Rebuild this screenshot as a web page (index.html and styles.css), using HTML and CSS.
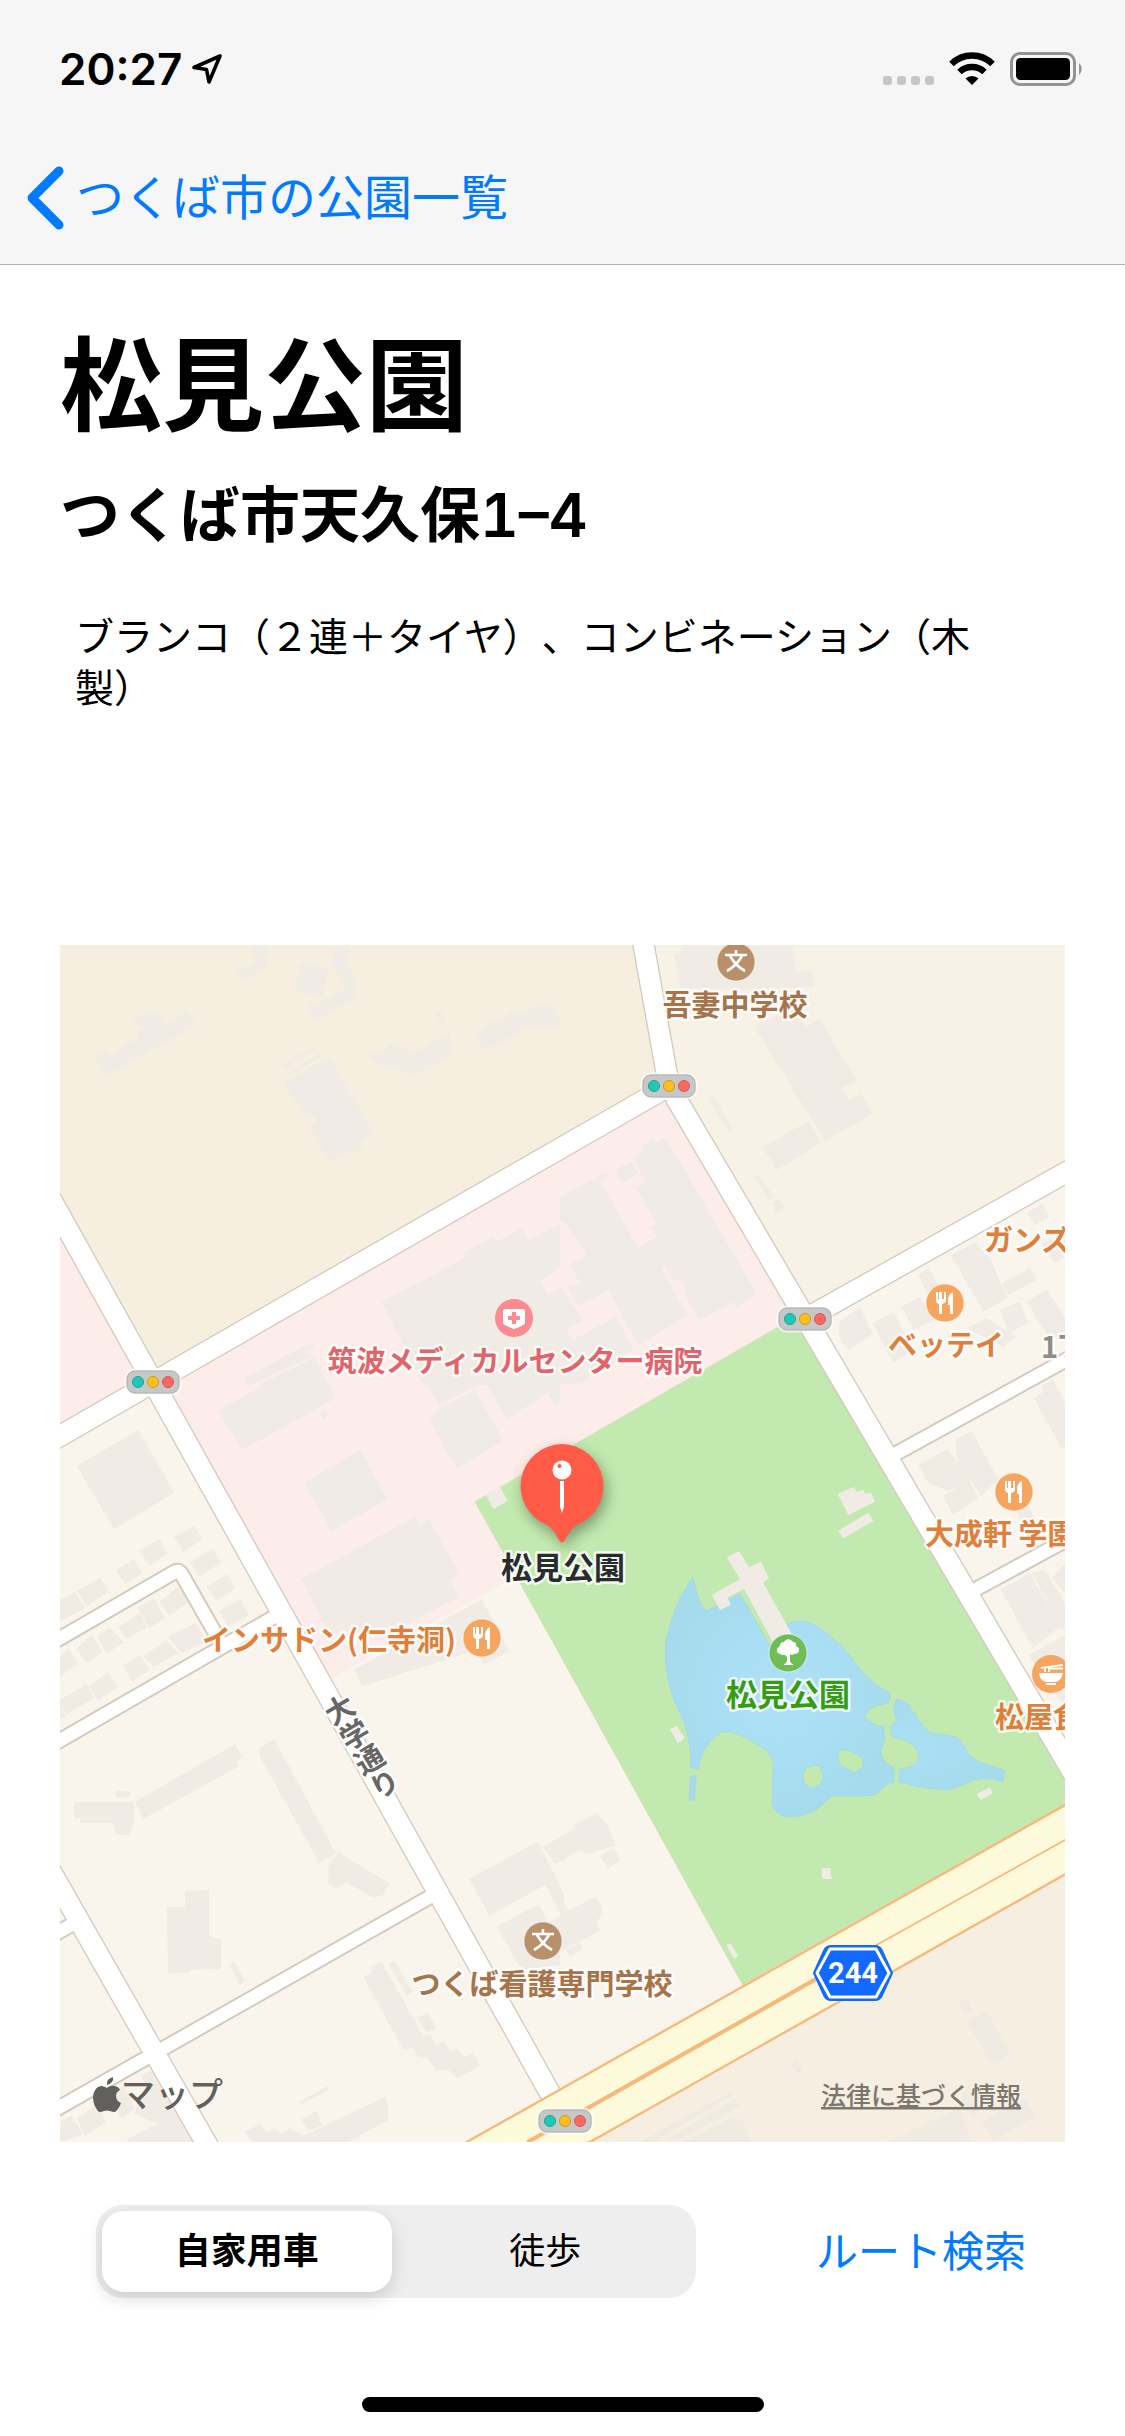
FILE: index.html
```html
<!DOCTYPE html>
<html lang="ja">
<head>
<meta charset="utf-8">
<meta name="viewport" content="width=device-width">
<title>松見公園</title>
<link rel="stylesheet" href="styles.css">
</head>
<body>
<header class="top">
  <div class="status">
    <div class="status-side">
      <span class="time">20:27</span>
      <svg class="locate" width="32" height="32" viewBox="0 0 32 32" aria-hidden="true"><path d="M29 3 3 14.500 15.500 16.500 18 29Z" fill="none" stroke="#000" stroke-width="3.600" stroke-linejoin="round"/></svg>
    </div>
    <div class="status-side">
      <svg width="52" height="34" viewBox="0 0 52 34" aria-hidden="true"><g fill="#c6c6c6"><rect y="24" width="9" height="9" rx="3"/><rect x="14" y="24" width="9" height="9" rx="3"/><rect x="28" y="24" width="9" height="9" rx="3"/><rect x="42" y="24" width="9" height="9" rx="3"/></g></svg>
      <svg class="wifi" width="46" height="34" viewBox="0 0 46 34" aria-hidden="true"><path d="M23 33 16.500 26.500A9.500 9.500 0 0 1 29.500 26.500Z"/><path d="M10.500 20A18 18 0 0 1 35.500 20M2.500 12A29 29 0 0 1 43.500 12" fill="none" stroke="#000" stroke-width="6.500"/></svg>
      <svg class="battery" width="74" height="34" viewBox="0 0 74 34" aria-hidden="true"><rect x="1.500" y="1.500" width="63" height="31" rx="8.500" fill="none" stroke="#939393" stroke-width="3"/><rect x="6" y="6" width="54" height="22" rx="4.500"/><path d="M69 11a8 8 0 0 1 0 12Z" fill="#939393"/></svg>
    </div>
  </div>
  <nav class="nav">
    <a class="back" href="#">
      <svg width="46" height="66" viewBox="0 0 46 66" aria-hidden="true"><path d="M37 6 10 33 37 60" fill="none" stroke="#007aff" stroke-width="9" stroke-linecap="round" stroke-linejoin="round"/></svg>
      <span>つくば市の公園一覧</span>
    </a>
  </nav>
</header>
<main class="content">
  <h1 class="name">松見公園</h1>
  <h2 class="address">つくば市天久保1–4</h2>
  <p class="equipment">ブランコ（２連＋タイヤ）、コンビネーション（木製）</p>
  <svg class="map" viewBox="0 0 1005 1197" role="img" aria-label="松見公園周辺の地図">
    <defs>
      <radialGradient id="deep"><stop offset="0" stop-color="#aee1f6"/><stop offset="1" stop-color="#a6dbee"/></radialGradient>
      <g id="signal"><rect x="-27" y="-12" width="54" height="24" rx="9" fill="#c6c7c9" stroke="#fff" stroke-opacity=".6" stroke-width="3"/><rect x="-26" y="-11" width="52" height="22" rx="8" fill="#c6c7c9" stroke="#aeb0b2"/><circle cx="-15" r="5.500" fill="#1dc9b7" stroke="#25a092"/><circle r="5.500" fill="#ffbf1c" stroke="#d09a16"/><circle cx="15" r="5.500" fill="#ff6763" stroke="#d65754"/></g>
      <g id="food"><circle r="19" fill="#f5a560" stroke="#fff" stroke-opacity=".5"/><path d="M-9-11V-3Q-9 0-6 1V11H-3V1Q1 0 1-3V-11H-1V-4H-3V-11H-6V-4H-7V-11ZM8-11Q3-9 3-2V2H5V11H8Z" fill="#fff"/></g>
      <g id="school"><circle r="19" fill="#b8916c" stroke="#fff" stroke-opacity=".5"/><path d="M0-12V-7M-11-7H11M6-6Q0 4-9 9M-6-6Q0 4 9 9" fill="none" stroke="#fff" stroke-width="2.600"/></g>
      <path id="roads" d="M-40 1496 1827 423M-40 740 1501 3500M1740-60 1820 385 1851 465 3074 2542M2235 1122 3060 659"/>
      <path id="lanes" d="M-40 2757 263 3288 480 3666"/>
      <path id="streets" d="M2460 1552 3060 1222M2710 1953 3060 1763M-40 2103 345 1880Q357 1875 364 1886L480 2090M-40 2409 670 2000M-40 3509 1125 2847M-40 2981 60 2925"/>
    </defs>
    <g transform="scale(.333333)">
      <path fill="#f9f5ed" d="M0 0H3015V3591H0Z"/>
      <path fill="#f6efdf" d="M0 0H1755L1827 423 265 1315 0 808Z"/>
      <path fill="#f8f1e5" d="M1755 0H3015V684L2235 1122 1827 423Z"/>
      <path fill="#f9f4ec" d="M805 2205 1375 1890 2048 3120 1500 3433Z"/>
      <path fill="#fcedea" d="M0 808 279 1310 0 1473ZM279 1310 1827 423 2235 1110 1245 1670 1375 1890 805 2205Z"/>
      <path fill="#c2e9af" stroke="#dfd9b9" stroke-width="2" d="M1245 1670 2170 1137 2235 1110 3015 2441V2580L2048 3120Z"/>
      <path fill="#f6eee0" d="M3015 2788V3591H1590Z"/>

      <!-- north-west blocks -->
      <g fill="#f0ebe4" transform="translate(0 -15)">
        <path d="M565 15H612L631 55 615 68 620 85 545 128 522 85 540 78 548 86 590 63ZM722 65 807 85 787 170 703 150ZM828 15H870L858 65 895 133 880 143 887 172 765 241 738 190 757 182 767 197 856 145 815 68ZM220 238 297 208 318 250 370 222V208L380 205 408 253 135 410 110 370V347L138 332 150 345 240 290 232 275 262 260 232 262ZM668 372 765 318 770 328 675 385ZM686 397 778 342 780 350 690 406ZM673 427 808 350 942 585 905 605 908 622 872 645 862 632 808 663 750 560 770 545 765 525 737 535ZM925 345 980 328 985 310 1070 335 1165 280 1178 308 1168 318 1180 340 1065 405 942 368ZM1125 222 1142 215 1163 245 1150 257ZM1240 285 1290 255V240H1320L1360 213 1400 220 1430 190 1475 195 1500 235V262L1440 265 1390 260 1375 280 1270 330Z"/>
        <path d="M965 1085 1215 955 1212 937 1300 890 1310 905 1385 863 1407 900 1500 850V985L1440 1020 1462 1062 1500 1045V1335H1090ZM555 1315 755 1208 765 1220 560 1335ZM595 1335 765 1255 800 1335Z"/>
      </g>
      <!-- north-east blocks -->
      <g fill="#f0ebe4" transform="translate(1500 -15)">
        <path d="M362 15H697L708 95 755 88 762 140 600 150 362 145 343 48 362 38ZM582 258 700 200 735 260 778 235 888 422 845 445 867 480 902 462 937 522 795 602ZM445 475 458 465 517 568 505 576ZM608 620 747 542 783 608 650 690ZM583 712 597 703 640 770 628 780ZM635 790 655 777 672 802 650 820Z"/>
        <path d="M0 770 135 698 145 705 120 725 235 923 292 890 275 862 292 855 228 743 256 727 220 655 248 635 247 618 280 598 288 607 317 595 590 1060 528 1100 520 1085 418 1140 375 1065 382 1050 358 1018 345 1025 315 980 303 985 352 1075 383 1125 235 1215 145 1050 55 1098 20 1040 60 1028 30 975 80 945 15 848 0 845ZM165 690 215 665 235 700 185 730ZM0 1035 70 1140 18 1168 38 1200 168 1130 220 1230 60 1330H0Z"/>
        <path d="M1172 945 1245 908 1290 955 1342 1075 1270 1115ZM1400 820 1447 790 1468 830 1425 855ZM1445 910 1500 890 1515 890V950L1485 970ZM1325 1030 1410 985 1430 1020 1345 1065ZM1075 1005 1105 985 1140 1040 1100 1060ZM1025 1100 1080 1070 1120 1140 1060 1170ZM938 1150 1000 1115 1060 1230 1000 1268ZM838 1145 900 1102 940 1182 865 1230 838 1195ZM1320 1110 1380 1085 1405 1150 1345 1180ZM1400 1085 1460 1048 1515 1130V1180L1470 1200ZM1220 1165 1280 1135 1370 1190 1330 1220Z"/>
      </g>
      <!-- west blocks -->
      <g fill="#f0ebe4" transform="translate(0 1245)">
        <path d="M50 318 235 210 343 398 162 508ZM475 152 765-10 827 115 547 270ZM778 160 795 148 807 165 790 178ZM555 55 700-25 765-15 570 75ZM1090 50 1075-20H1500V130L1485 135 1460 100 1342 177 1275 62 1138 135ZM1107 180 1128 165 1125 153 1245 90 1330 243 1190 325ZM733 370 900 270 982 418 815 512ZM723 658 1065 470 1080 492 1108 478 1197 643 1172 660 1197 710 1000 815H808ZM880 930 1265 718 1348 873 1272 912 1250 870 908 978Z"/>
        <path d="M342 532 402 498 427 537 370 577ZM238 572 298 538 322 580 270 617ZM168 630 222 597 247 640 195 672ZM390 605 458 567 483 608 417 650ZM440 680 502 642 527 685 470 723ZM477 753 542 718 568 765 505 800ZM0 720 45 695 75 745 0 783ZM50 692 120 653 145 695 80 738ZM300 725 352 682 388 725 327 768ZM232 742 282 717 315 775 268 804ZM175 800 240 760 262 800 200 838ZM112 830 150 802 190 848 140 880ZM48 865 95 825 128 875 80 910ZM0 890 25 865 55 910 0 950ZM323 830 405 790 440 845 365 880ZM252 888 318 840 355 880 282 920ZM190 915 240 885 270 930 215 965ZM85 980 145 937 175 980 115 1020ZM0 1020 80 972 102 1015 20 1062 0 1040ZM0 1040 18 1070 0 1078Z"/>
        <path d="M225 1325 525 1153 547 1193 530 1205 538 1218 250 1377ZM598 1163 643 1138 828 1480 778 1510 600 1190ZM168 1293H210V1312H168ZM42 1326H222V1395L205 1425H170L158 1389H60V1374H42ZM835 1477 988 1570 970 1605 938 1613 860 1567 828 1586 805 1573V1520Z"/>
      </g>
      <!-- south-west blocks -->
      <g fill="#f0ebe4" transform="translate(0 2505)">
        <path d="M375 332 447 330V468L483 480V567L390 570V576L324 581 321 381H375ZM507 553 523 545 555 605 538 615ZM910 592 935 575V560L963 542 1090 768 1110 762 1130 795 1150 783 1172 815 1190 803 1215 832 1238 818 1260 858 1192 895 1165 870 1130 872 1100 832 1075 832 1060 805 1030 808ZM985 552 1005 543 1057 635 1040 648ZM1072 713 1105 697 1128 745 1098 760ZM718 965 805 917 808 928 722 974ZM725 1018 770 993 787 1035 745 1055ZM555 1055 600 1033 620 1055 645 1043 665 1062 690 1045 730 1067 975 950 985 985V1020L865 1086H575ZM245 885 290 862 360 990 375 1035 400 1086H200L205 1075 300 1030 275 1025 220 1000 260 940ZM50 1015 110 975 140 1025 75 1067ZM145 950 190 915 225 985 185 1017ZM0 1025 35 1007 70 1065 0 1086Z"/>
        <path d="M1227 297 1433 185 1490 295 1515 350 1500 395 1455 315 1288 407ZM1447 200 1515 165V240L1485 250ZM1310 440 1435 373 1465 425 1500 410V555L1385 570Z"/>
      </g>
      <!-- blocks east of the college and south of the highway -->
      <g fill="#f0ebe4" transform="translate(1500 2505)">
        <path d="M0 170 48 145 42 135 112 98 145 140 167 198 75 222 65 208 0 243ZM120 228 158 203 182 240 145 265ZM0 348 25 392 103 352Q130 370 128 405L108 425 120 452 0 515ZM18 510 60 487 68 505 30 530Z"/>
        <path fill="#efeae2" d="M1193 672 1218 656 1237 690 1213 700ZM1222 727 1280 692 1350 820 1320 845 1295 852ZM690 852 712 838 728 873 710 883ZM240 1086 515 935 518 945 280 1086ZM325 1075 525 958 538 980 345 1086ZM370 1086 520 1010 545 1020 575 1086ZM980 1086 1195 985 1235 1086ZM1265 1025 1395 955 1425 1010 1300 1080ZM1205 960 1225 910 1260 990 1240 1018Z"/>
      </g>

      <g transform="translate(1500 1245)">
        <path fill="url(#deep)" stroke="#a4d9e4" stroke-width="3" fill-rule="evenodd" d="M398 652 408 690 420 725 437 754 475 735 540 700 628 855 700 870 680 793Q735 770 782 806L845 858Q880 900 910 940 950 980 992 1002L985 1030Q925 1035 915 1070 935 1096 970 1100L975 1135 962 1172Q970 1215 1002 1222V1265L985 1270 945 1305Q880 1312 820 1307 800 1318 780 1340 745 1372 680 1370 640 1360 636 1330L640 1205 625 1175Q580 1142 540 1125 490 1105 475 1122 420 1165 415 1228L392 1222V1180Q385 1110 365 1070 310 970 316 850 330 780 362 710ZM845 1170Q870 1165 908 1195V1222L885 1238 840 1215Q825 1185 845 1170ZM738 1222 762 1216 780 1218 790 1250 780 1275 755 1285 733 1270 727 1248Z"/>
        <path fill="url(#deep)" stroke="#a4d9e4" stroke-width="3" d="M1010 1018Q1040 1018 1055 1050L1090 1100 1110 1118Q1150 1125 1185 1130 1210 1145 1225 1180 1245 1205 1285 1215L1335 1232 1328 1265Q1265 1245 1225 1268L1170 1290Q1100 1290 1018 1266V1227Q1070 1225 1078 1190 1070 1140 995 1130L992 1098 1010 1080 1000 1045ZM392 1248H408L403 1320H388Z"/>
        <g fill="#f0ebe4"><path d="M500 592 537 573 568 622 603 605 627 655 610 668 700 830 640 850 552 687 503 712 512 735 480 750 455 705 540 657ZM833 402 882 380 890 395 910 390 915 403 932 397 945 425 865 465ZM835 512 925 458 940 483 850 535ZM330 1108 350 1098 375 1135 353 1150ZM1250 1302 1290 1282 1298 1300 1262 1320ZM785 1525H812V1550H816V1557H790L785 1550ZM498 1755 512 1750 535 1788 522 1797ZM-222 405-192 387-182 376-157 422-200 448Z"/>
        <path d="M1075 315 1162 267 1195 310 1185 240 1235 212 1315 358 1262 410 1235 362 1165 393 1105 370ZM1148 408 1230 362 1255 415 1178 465ZM1422 115 1450 95 1443 78 1480 58 1515 125V270L1505 265ZM1370 455 1400 435 1430 480H1380ZM1322 688 1410 640 1500 800 1418 865ZM1415 637 1455 628 1515 730V810L1502 808ZM1405 885 1515 825V1040ZM1475 655 1515 610V700Z"/></g>
      </g>

      <g fill="none" stroke="#d5cabd"><use href="#roads" stroke-width="68"/><use href="#lanes" stroke-width="68"/><use href="#streets" stroke-width="50"/></g>
      <g fill="none" stroke="#fff"><use href="#roads" stroke-width="60"/><use href="#lanes" stroke-width="60"/><use href="#streets" stroke-width="38"/></g>
      <path fill="#fcfadb" stroke="#f6b97b" stroke-width="7" d="M3060 2555 1217 3593 1400 3640 1590 3591 3060 2763Z"/>
      <path fill="none" stroke="#f6b97b" stroke-width="5" d="M3060 2660 2265 3103"/>
      <path fill="#f6b97b" d="M2450 2998 2265 3097 1400 3586V3600L2265 3111Z"/>
    </g>

    <use href="#signal" x="609" y="141"/><use href="#signal" x="745" y="374"/><use href="#signal" x="93" y="437"/><use href="#signal" x="505" y="1176"/>
    <use href="#school" x="676" y="17"/><use href="#school" x="483" y="996"/>
    <use href="#food" x="885" y="358"/><use href="#food" x="954" y="547"/><use href="#food" x="422" y="693"/>
    <g transform="translate(991 729)"><circle r="19" fill="#f5a560"/><path fill="#fff" d="M-12-1H12Q10 7 5 8H-5Q-11 7-12-1ZM-5 9H5V11H-5ZM-10-7 12-10V-8L-1-6.500H12V-4.500H-1V-2H-3V-6H-5V-2H-7V-6L-10-5Z"/></g>
    <g transform="translate(454 373)"><circle r="19" fill="#fb8b90"/><path fill="#fff" d="M-9-9H9Q11-9 11-7V5Q11 7 0 11-11 7-11 5V-7Q-11-9-9-9Z"/><path stroke="#fb8b90" stroke-width="4" d="M0-6V6M-6 0H6"/></g>
    <g transform="translate(728 708)"><circle r="19" fill="#70bd57" stroke="#fff" stroke-opacity=".6"/><path fill="#fff" d="M-1.500 1Q-5 3-8 1-12 0-11-4-10-6-8-7-8-11-4-11-2-15 3-13 5-11 5-11 9-11 8-7 12-5 11-2 10 1 6 1 4 3 2 1V7Q2 10 5 11V12H-4V11Q-1 10-1 7V4L-4 1Z"/></g>

    <g class="label">
      <g fill="#a6744a"><text x="675" y="71" text-anchor="middle">吾妻中学校</text><text x="482" y="1050" text-anchor="middle">つくば看護専門学校</text></g>
      <g fill="#df7f3a"><text x="924" y="306">ガンズ</text><text x="886" y="411" text-anchor="middle">ベッテイ</text><text x="865" y="600">大成軒 学園</text><text x="935" y="783">松屋食</text><text x="269" y="706" text-anchor="middle">インサドン(仁寺洞)</text></g>
      <text x="455" y="427" text-anchor="middle" fill="#e0656b">筑波メディカルセンター病院</text>
      <text x="981" y="413" fill="#908d89">1丁目</text>
      <text class="street" fill="#666" transform="translate(272 752) rotate(-31)">大学通り</text>
      <text class="park" x="728" y="761" text-anchor="middle" fill="#369c12">松見公園</text>
    </g>

    <g transform="translate(793 1028)"><path fill="#1169ff" stroke="#1169ff" stroke-width="4" stroke-linejoin="round" d="M-22-26H22Q26-26 28-22L38 0 28 22Q26 26 22 26H-22Q-26 26-28 22L-38 0-28-22Q-26-26-22-26Z"/><path fill="none" stroke="#fff" stroke-width="3" stroke-linejoin="round" d="M-23-24H23L36 0 23 24H-23L-36 0Z"/><text class="route" y="10" text-anchor="middle">244</text></g>

    <path class="pin-shadow" d="M502 499A42 42 0 0 1 517 580Q510 583 502 598 494 583 487 580A42 42 0 0 1 502 499Z"/>
    <path fill="#ff5b46" d="M502 499A42 42 0 0 1 517 580Q511 583 505 595 502 600 499 595 493 583 487 580A42 42 0 0 1 502 499Z"/>
    <path fill="#fff" d="M500 536H504V562L502 568 500 562Z"/><circle cx="502" cy="525" r="9.500" fill="#fff"/><circle cx="499.500" cy="521" r="2" fill="#ff5b46"/>
    <text class="label park" x="503" y="634" text-anchor="middle" fill="#2b2b2d">松見公園</text>

    <g fill="#62605d"><path d="M53 1132Q54 1138 47 1140 46 1134 53 1132ZM47 1143Q51 1140 55 1141 59 1142 60 1145 56 1147 56 1151 56 1156 61 1158 59 1164 55 1167 52 1167 50 1166 47 1165 44 1166 42 1167 39 1167 33 1161 33 1152 34 1142 41 1141 44 1141 47 1143Z"/><text class="brand" x="61" y="1162">マップ</text></g>
    <a href="#legal"><text class="legal" x="861" y="1160" text-anchor="middle">法律に基づく情報</text></a>
  </svg>
</main>
<footer class="controls">
  <fieldset class="segments" aria-label="移動手段">
    <label><input type="radio" name="mode" checked><span>自家用車</span></label>
    <label><input type="radio" name="mode"><span>徒歩</span></label>
  </fieldset>
  <button class="route-button" type="button">ルート検索</button>
</footer>
<div class="home-bar"></div>
</body>
</html>
```
FILE: styles.css
```css
* {
  box-sizing: border-box;
}

body {
  margin: 0;
  background: #fff;
  color: #000;
  font-family: Inter, "Noto Sans CJK JP", sans-serif;
  text-spacing-trim: space-all;
}

.top {
  background: #f6f6f6;
  border-bottom: 1px solid #b3b3b3;
}

.status {
  display: flex;
  justify-content: space-between;
  height: 132px;
  padding: 6px 41px 0 59px;
  align-items: center;
}

.status-side {
  display: flex;
  align-items: center;
}

.time {
  font-size: 44px;
  font-weight: 600;
  line-height: 52px;
}

.locate {
  margin-left: 9px;
}

.wifi {
  margin-left: 14px;
}

.battery {
  margin-left: 15px;
}

.nav {
  display: flex;
  height: 132px;
  padding-left: 22px;
  align-items: center;
}

.back {
  display: flex;
  align-items: center;
  gap: 8px;
  color: #007aff;
  font-size: 48px;
  font-weight: 400;
  line-height: 72px;
  text-decoration: none;
}

.content {
  padding: 61px 60px 0;
}

.name {
  margin: 0;
  font-size: 102px;
  font-weight: 700;
  line-height: 120px;
}

.address {
  margin: 33px 0 0;
  font-size: 60px;
  font-variant-numeric: tabular-nums;
  font-weight: 600;
  line-height: 72px;
}

.equipment {
  min-height: 394px;
  margin: 0;
  padding: 60px 30px 0 15px;
  font-size: 39px;
  font-weight: 400;
  line-height: 51px;
}

.map {
  display: block;
  width: 100%;
  height: auto;
  overflow: hidden;
}

.label {
  font-family: "Noto Sans CJK JP", sans-serif;
  font-size: 29px;
  font-weight: 700;
  stroke: #fff;
  stroke-opacity: .8;
  stroke-width: 5px;
  stroke-linejoin: round;
  paint-order: stroke;
}

.park {
  font-size: 31px;
}

.street {
  writing-mode: vertical-rl;
}

.route {
  fill: #fff;
  font-family: Roboto, sans-serif;
  font-size: 29px;
  font-weight: 700;
}

.pin-shadow {
  fill: #000;
  fill-opacity: .35;
  filter: blur(7px);
  transform: translate(3px, 6px);
}

.brand {
  font-size: 34px;
  font-weight: 500;
}

.legal {
  fill: #7b776f;
  font-size: 25px;
  font-weight: 500;
  text-decoration: underline;
}

.controls {
  display: flex;
  justify-content: space-between;
  align-items: center;
  padding: 63px 99px 0 96px;
}

.segments {
  display: grid;
  grid-template-columns: 1fr 1fr;
  gap: 9px;
  flex: 0 1 600px;
  margin: 0;
  padding: 6px;
  border: 0;
  border-radius: 27px;
  background: #eee;
}

.segments input {
  position: absolute;
  opacity: 0;
}

.segments span {
  display: block;
  border-radius: 22px;
  font-size: 36px;
  line-height: 81px;
  text-align: center;
}

.segments input:checked + span {
  background: #fff;
  box-shadow: 0 6px 18px rgba(0, 0, 0, .15);
  font-weight: 700;
}

.route-button {
  padding: 0;
  border: 0;
  background: none;
  color: #007aff;
  font: inherit;
  font-size: 42px;
  font-weight: 400;
  line-height: 60px;
}

.home-bar {
  width: 402px;
  height: 15px;
  margin: 99px auto 24px;
  border-radius: 8px;
  background: #000;
}
```
